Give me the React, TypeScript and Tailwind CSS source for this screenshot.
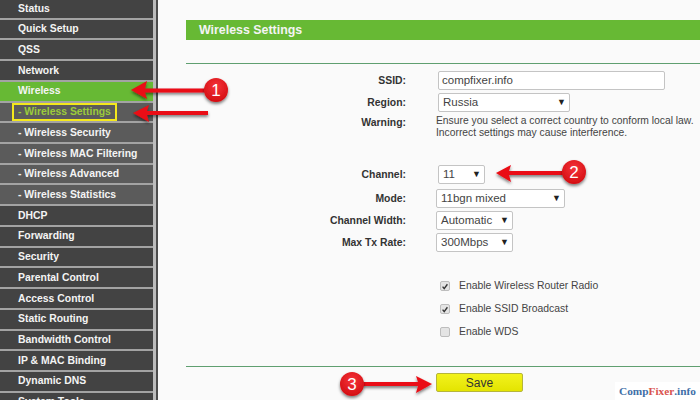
const sansFont = "font-['Liberation_Sans',Arial,sans-serif]";

const menu = [
  { label: 'Status' },
  { label: 'Quick Setup' },
  { label: 'QSS' },
  { label: 'Network' },
  { label: 'Wireless', active: true },
  { label: '- Wireless Settings', sub: true, current: true },
  { label: '- Wireless Security', sub: true },
  { label: '- Wireless MAC Filtering', sub: true },
  { label: '- Wireless Advanced', sub: true },
  { label: '- Wireless Statistics', sub: true },
  { label: 'DHCP' },
  { label: 'Forwarding' },
  { label: 'Security' },
  { label: 'Parental Control' },
  { label: 'Access Control' },
  { label: 'Static Routing' },
  { label: 'Bandwidth Control' },
  { label: 'IP & MAC Binding' },
  { label: 'Dynamic DNS' },
  { label: 'System Tools' },
];

function MenuRow({ label, active, sub, current }: { label: string; active?: boolean; sub?: boolean; current?: boolean }) {
  const bg = active ? 'bg-[#67b934]' : sub ? 'bg-[#5b5b5b]' : 'bg-[#434343]';
  return (
    <div className={`flex h-[20.72px] shrink-0 items-center whitespace-nowrap border-b-2 border-[#a3a3a3] pl-[18px] text-[10.4px] font-bold ${bg}`}>
      {current ? (
        <span className="-ml-[6px] flex h-[18px] w-[105px] items-center border-2 border-[#f4e81c] pl-1 text-[#9ccb3a]">{label}</span>
      ) : (
        <span className="text-[#f4f4f4]">{label}</span>
      )}
    </div>
  );
}

function Field({ label, children, className }: { label: string; children: React.ReactNode; className?: string }) {
  return (
    <div className={`flex items-center ${className ?? ''}`}>
      <div className="w-[221px] pr-px text-right text-[10.4px] font-bold text-[#333]">{label}</div>
      {children}
    </div>
  );
}

function Select({ value, width, left }: { value: string; width: string; left: string }) {
  return (
    <div className={`flex h-[19px] items-center justify-between rounded-[2px] border border-[#c4c4c4] bg-white pl-[4px] pr-[3px] text-[11.5px] text-[#444] ${width} ${left}`}>
      <span>{value}</span>
      <span className="text-[9px] text-[#222]">▼</span>
    </div>
  );
}

function Check({ label, checked }: { label: string; checked?: boolean }) {
  return (
    <div className="flex h-[22px] items-center pl-[254px] text-[10.4px] text-[#444]">
      <span className="flex h-[10px] w-[10px] items-center justify-center rounded-[2px] border border-[#bdbdbd] bg-[#e4e4e4]">
        {checked && (
          <svg viewBox="0 0 10 10" className="h-[9px] w-[9px]">
            <path d="M2 5.2 L4 7.6 L8 2.2" fill="none" stroke="#333" strokeWidth="1.7" />
          </svg>
        )}
      </span>
      <span className="ml-[9px]">{label}</span>
    </div>
  );
}

function Callouts() {
  const arrows = [
    'M131 90 L147 81 L145 88.5 L205 88.5 L205 92.5 L145 92.5 L147 99 Z',
    'M133 113 L149 105 L147 111 L208 111 L208 115 L147 115 L149 122 Z',
    'M496 173 L511 165 L509 171 L566 171 L566 175 L509 175 L511 182 Z',
    'M432 384 L416 376 L418 382 L362 382 L362 386 L418 386 L416 393 Z',
  ];
  const badges = [
    { x: 216, y: 90, n: '1' },
    { x: 574, y: 172, n: '2' },
    { x: 352, y: 384, n: '3' },
  ];
  return (
    <svg viewBox="0 0 700 400" className="pointer-events-none absolute inset-0 h-[400px] w-[700px]">
      <defs>
        <filter id="shadow" x="-20%" y="-60%" width="140%" height="220%">
          <feDropShadow dx="0" dy="2" stdDeviation="1.5" floodColor="#000" floodOpacity="0.5" />
        </filter>
        <radialGradient id="badge" cx="50%" cy="35%" r="65%">
          <stop offset="0%" stopColor="#f5343a" />
          <stop offset="100%" stopColor="#d40d12" />
        </radialGradient>
      </defs>
      {arrows.map((d) => (
        <path key={d} d={d} fill="#ea0a12" filter="url(#shadow)" />
      ))}
      {badges.map((b) => (
        <g key={b.n}>
          <circle cx={b.x} cy={b.y} r="12" fill="url(#badge)" filter="url(#shadow)" />
          <text x={b.x} y={b.y + 6} textAnchor="middle" fontSize="17" fill="#fff" fontFamily="Liberation Sans, Arial, sans-serif">
            {b.n}
          </text>
        </g>
      ))}
    </svg>
  );
}

export default function App() {
  return (
    <div className={`relative flex h-[400px] w-[700px] overflow-hidden bg-[#fafafa] ${sansFont}`}>
      {/* Sidebar */}
      <div className="flex h-[400px] w-[158px] shrink-0 overflow-hidden border-r-2 border-[#4c4c4c] bg-[#bcbcbc]">
        <div className="-mt-px flex w-[153px] flex-col">
          {menu.map((item) => (
            <MenuRow key={item.label} {...item} />
          ))}
        </div>
      </div>

      {/* Main */}
      <div className="flex-1 pl-[28px] pt-5">
        <div className="flex h-5 items-center bg-[#67b934] pl-[13px] text-[12.4px] font-bold text-[#f4f4f4]">Wireless Settings</div>
        <div className="mt-[23px] h-px bg-[#5f9f70]" />

        <Field label="SSID:" className="mt-[7px]">
          <div className="ml-[31px] flex h-[19px] w-[227px] items-center rounded-[2px] border border-[#c4c4c4] bg-white pl-[3px] text-[11.5px] text-[#444]">compfixer.info</div>
        </Field>
        <Field label="Region:" className="mt-[3px]">
          <Select value="Russia" width="w-[132px]" left="ml-[31px]" />
        </Field>
        <div className="mt-[3px] flex">
          <div className="w-[221px] pr-px text-right text-[10.4px] font-bold text-[#333]">Warning:</div>
          <div className="ml-[29px] whitespace-nowrap text-[10.3px] leading-[12px] text-[#444]">
            Ensure you select a correct country to conform local law.
            <br />
            Incorrect settings may cause interference.
          </div>
        </div>

        <Field label="Channel:" className="mt-[26px]">
          <Select value="11" width="w-[47px]" left="ml-[31px]" />
        </Field>
        <Field label="Mode:" className="mt-[5px]">
          <Select value="11bgn mixed" width="w-[129px]" left="ml-[29px]" />
        </Field>
        <Field label="Channel Width:" className="mt-[3px]">
          <Select value="Automatic" width="w-[77px]" left="ml-[29px]" />
        </Field>
        <Field label="Max Tx Rate:" className="mt-[3px]">
          <Select value="300Mbps" width="w-[77px]" left="ml-[29px]" />
        </Field>

        <div className="mt-[23px] flex flex-col gap-px">
          <Check label="Enable Wireless Router Radio" checked />
          <Check label="Enable SSID Broadcast" checked />
          <Check label="Enable WDS" />
        </div>

        <div className="mt-[23px] h-px bg-[#5f9f70]" />
        <div className="mt-[6px] flex pl-[250px]">
          <button className="h-[19px] w-[87px] rounded-[2px] border border-[#b5b53a] bg-gradient-to-b from-[#f2f21a] to-[#e4e400] text-[12px] text-[#333]">Save</button>
        </div>
      </div>

      {/* Overlays */}
      <Callouts />
      <div className="absolute bottom-0 right-0 flex h-[18px] w-[85px] items-center justify-center bg-white font-['Liberation_Serif',serif] text-[11.3px] font-bold text-[#3f6fa8]">
        Comp<span className="text-[#d9534f]">Fixer</span>.info
      </div>
    </div>
  );
}
